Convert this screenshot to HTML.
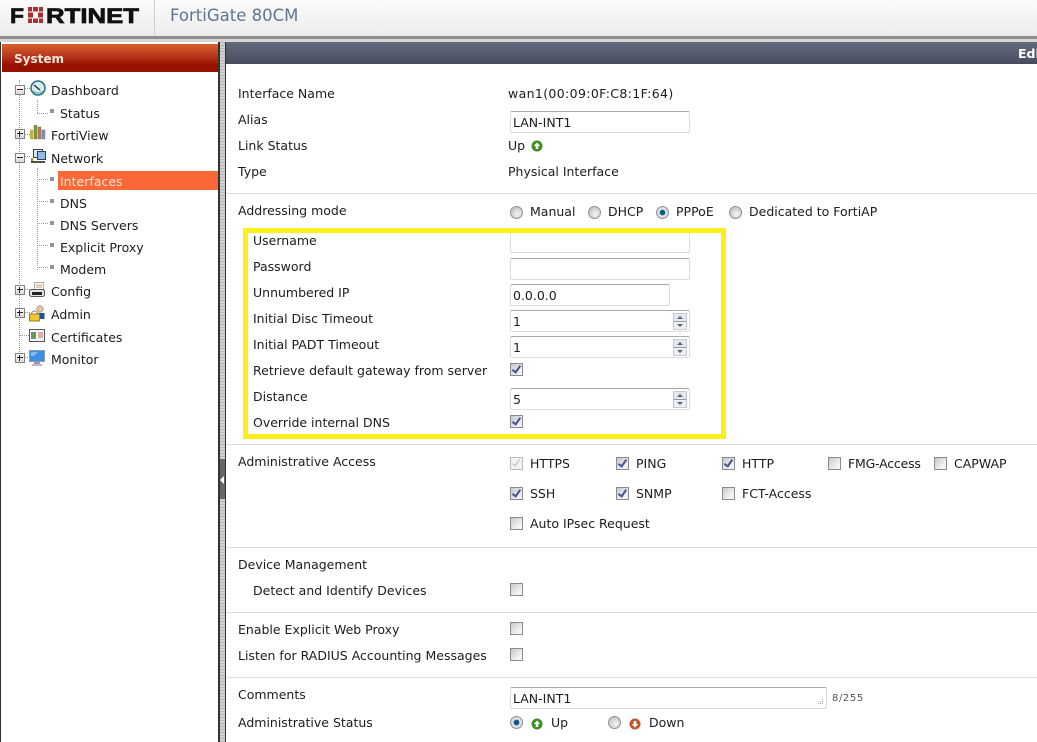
<!DOCTYPE html>
<html><head><meta charset="utf-8"><title>FortiGate 80CM</title>
<style>
html,body{margin:0;padding:0;background:#fff}
#p{position:relative;width:1037px;height:742px;overflow:hidden;background:#fff;font:12.5px/16px "DejaVu Sans","Liberation Sans",sans-serif;color:#1c1c1c}
#p div,#p span,#p svg{position:absolute}
.t{white-space:nowrap;transform:translateY(1px)}
.n{transform:none}
.sep{left:226px;width:811px;height:1px;background:#dcdcdc}
.in{left:510px;width:178px;height:20px;border:1px solid #dcdcdc;border-top-color:#a8a8a8;border-radius:2px;background:#fff;line-height:22px;text-indent:2px;box-sizing:content-box;white-space:nowrap}
.cb{width:11px;height:11px;border:1px solid #8a8a8a;background:linear-gradient(135deg,#c8c8c8,#f4f4f4 75%)}
.cb.c{background:linear-gradient(135deg,#c4c6d2,#f0f0f6 75%)}
.cb.c:after{content:"";position:absolute;left:3px;top:0;width:3px;height:7px;border:solid #44528f;border-width:0 2px 2px 0;transform:rotate(35deg)}
.cb.d{border-color:#bbb;background:#f2f2f2}
.cb.d:after{content:"";position:absolute;left:3px;top:0;width:3px;height:7px;border:solid #bbb;border-width:0 1px 1px 0;transform:rotate(35deg)}
.r{width:11px;height:11px;border:1px solid #909090;border-radius:50%;background:radial-gradient(circle at 60% 65%,#f4f4f4,#bcbcbc 90%)}
.r.on{background:radial-gradient(circle,#12557f 0,#12557f 30%,#dfe8ee 42%,#bfc8ce 100%)}
.sp{width:12px;height:15px;left:673px;background:linear-gradient(#e4e8ee 0,#e4e8ee 47%,#999 47%,#999 53%,#eef0f4 53%);border:1px solid #c4c8d0}
.sp:before{content:"";position:absolute;left:3px;top:2px;border:3px solid transparent;border-top:0;border-bottom:3px solid #56607a}
.sp:after{content:"";position:absolute;left:3px;bottom:2px;border:3px solid transparent;border-bottom:0;border-top:3px solid #56607a}
.ex{left:15px;width:8px;height:8px;border:1px solid #808080;background:linear-gradient(#fff,#d8d8d8)}
.ex:before{content:"";position:absolute;left:1px;top:3px;width:6px;height:1px;background:#222}
.ex.pl:after{content:"";position:absolute;left:3px;top:1px;width:1px;height:6px;background:#222}
.v{width:0;border-left:1px dotted #999}
.h{height:0;border-top:1px dotted #999}
.b{left:50px;width:4px;height:4px;background:#8f96a3}
</style></head><body><div id="p">

<!-- top bar -->
<div style="left:0;top:0;width:1037px;height:36px;background:linear-gradient(#fbfbfb,#ececec)"></div>
<div style="left:154px;top:0;width:1px;height:36px;background:#cfcfcf"></div>
<div style="left:0;top:36px;width:1037px;height:3px;background:#8f8f8f"></div>
<div style="left:0;top:39px;width:1037px;height:3px;background:#d6d6d6"></div>
<svg style="left:0;top:0" width="150" height="36">
<text x="10" y="23" font-family="Liberation Sans" font-weight="bold" font-size="21" textLength="14" lengthAdjust="spacingAndGlyphs" fill="#111" stroke="#111" stroke-width=".7">F</text>
<g fill="#a8302e"><rect x="28" y="7" width="4" height="4.5"/><rect x="33" y="7" width="5" height="4.5"/><rect x="39" y="7" width="4" height="4.5"/><rect x="28" y="12.5" width="5" height="5"/><rect x="38" y="12.5" width="5" height="5"/><rect x="28" y="18.5" width="4" height="4.5"/><rect x="33" y="18.5" width="5" height="4.5"/><rect x="39" y="18.5" width="4" height="4.5"/></g>
<text x="46" y="23" font-family="Liberation Sans" font-weight="bold" font-size="21" textLength="93" lengthAdjust="spacingAndGlyphs" fill="#111" stroke="#111" stroke-width=".7">RTINET</text>
</svg>
<span class="t n" style="left:170px;top:4px;line-height:24px;font-size:16.5px;color:#5f7691">FortiGate 80CM</span>

<!-- side frame -->
<div style="left:0;top:42px;width:1px;height:700px;background:#333"></div>
<div style="left:218px;top:42px;width:2px;height:700px;background:#333"></div>
<div style="left:220px;top:42px;width:5px;height:700px;background:repeating-linear-gradient(#b4b4b4 0,#b4b4b4 1px,#d2d2d2 1px,#d2d2d2 3px)"></div>
<div style="left:225px;top:42px;width:1px;height:700px;background:#333"></div>
<div style="left:220px;top:459px;width:5px;height:40px;background:#666"></div>
<div style="left:220px;top:476px;width:0;height:0;border:4px solid transparent;border-left:0;border-right:4px solid #fff"></div>

<!-- System header -->
<div style="left:2px;top:44px;width:216px;height:28px;background:linear-gradient(#d9602c 0,#b5361a 45%,#981000 75%,#981000 100%)"></div>
<span class="t n" style="left:14px;top:51px;font-weight:bold;font-size:12px;color:#f6e6dc">System</span>

<!-- tree lines -->
<div class="v" style="left:19px;top:80px;height:280px"></div>
<div class="v" style="left:37px;top:100px;height:13px"></div>
<div class="h" style="left:37px;top:113px;width:11px"></div>
<div class="v" style="left:37px;top:168px;height:102px"></div>
<div class="h" style="left:37px;top:179px;width:11px"></div>
<div class="h" style="left:37px;top:201px;width:11px"></div>
<div class="h" style="left:37px;top:223px;width:11px"></div>
<div class="h" style="left:37px;top:245px;width:11px"></div>
<div class="h" style="left:37px;top:267px;width:11px"></div>
<div class="h" style="left:24px;top:88px;width:6px"></div>
<div class="h" style="left:24px;top:134px;width:6px"></div>
<div class="h" style="left:24px;top:156px;width:6px"></div>
<div class="h" style="left:24px;top:289px;width:6px"></div>
<div class="h" style="left:24px;top:312px;width:6px"></div>
<div class="h" style="left:19px;top:335px;width:10px"></div>
<div class="h" style="left:24px;top:357px;width:6px"></div>

<div class="ex" style="top:85px"></div>
<div class="ex pl" style="top:129px"></div>
<div class="ex" style="top:153px"></div>
<div class="ex pl" style="top:285px"></div>
<div class="ex pl" style="top:308px"></div>
<div class="ex pl" style="top:353px"></div>

<!-- tree icons -->
<svg style="left:30px;top:80px" width="16" height="16"><circle cx="8" cy="8" r="7" fill="#d8ecef" stroke="#1f6f80" stroke-width="1.5"/><path d="M4 5l6 5" stroke="#233" stroke-width="1.4"/><path d="M3 11q5 4 10 0" stroke="#5a9" fill="none"/></svg>
<svg style="left:30px;top:125px" width="16" height="15"><rect x="0" y="5" width="3" height="9" fill="#d3ae3a" stroke="#8a7" stroke-width=".4"/><rect x="4" y="0" width="3" height="14" fill="#7a9a3a" stroke="#575" stroke-width=".4"/><rect x="8" y="2" width="3" height="12" fill="#b97a55" stroke="#755" stroke-width=".4"/><rect x="12" y="5" width="3" height="9" fill="#7d94c4" stroke="#557" stroke-width=".4"/></svg>
<svg style="left:29px;top:148px" width="18" height="17"><rect x="4.5" y="1.5" width="9" height="8" fill="#d8e8f6" stroke="#345"/><rect x="8.5" y="3.5" width="8" height="8" fill="#8fbde8" stroke="#345"/><path d="M2 14h14" stroke="#222" stroke-width="1.6"/><path d="M3 10v3" stroke="#b80" stroke-width="2"/></svg>
<svg style="left:29px;top:282px" width="17" height="16"><rect x="5.5" y=".5" width="9" height="8" fill="#fff" stroke="#aaa"/><path d="M7 3h6M7 5h6" stroke="#c96"/><rect x=".5" y="7.5" width="15" height="7" rx="2" fill="#e4e4e4" stroke="#555"/><rect x="3" y="10" width="10" height="3" fill="#222"/></svg>
<svg style="left:29px;top:305px" width="17" height="17"><circle cx="11" cy="4" r="3.2" fill="#e8c89a" stroke="#555" stroke-width=".5"/><path d="M8 8h7.5v6H8z" fill="#1e4fa0"/><path d="M2.5 9a3 3 0 0 1 6 0" fill="none" stroke="#888"/><rect x=".5" y="9" width="10" height="7" fill="#eec52e" stroke="#a57f10"/></svg>
<svg style="left:29px;top:329px" width="17" height="14"><rect x=".5" y=".5" width="15" height="12" fill="#f4f4f4" stroke="#555"/><rect x="2" y="3" width="5" height="7" fill="#6a9a5a"/><path d="M9 4h5M9 6h5M9 8h5" stroke="#c65"/></svg>
<svg style="left:29px;top:350px" width="17" height="17"><rect x=".5" y=".5" width="15" height="11" fill="#3a8fe8" stroke="#99a"/><path d="M2 3h6M2 5h4" stroke="#dde"/><rect x="5" y="12" width="6" height="2" fill="#99a"/><rect x="3" y="14" width="10" height="2" fill="#bbc"/></svg>

<!-- tree labels -->
<span class="t" style="left:51px;top:82px">Dashboard</span>
<div class="b" style="top:109px"></div><span class="t" style="left:60px;top:105px">Status</span>
<span class="t" style="left:51px;top:127px">FortiView</span>
<span class="t" style="left:51px;top:150px">Network</span>
<div style="left:58px;top:171px;width:160px;height:19px;background:#fb6837"></div>
<div class="b" style="top:177px"></div><span class="t" style="left:60px;top:173px;color:#fde3d6">Interfaces</span>
<div class="b" style="top:199px"></div><span class="t" style="left:60px;top:195px">DNS</span>
<div class="b" style="top:221px"></div><span class="t" style="left:60px;top:217px">DNS Servers</span>
<div class="b" style="top:243px"></div><span class="t" style="left:60px;top:239px">Explicit Proxy</span>
<div class="b" style="top:265px"></div><span class="t" style="left:60px;top:261px">Modem</span>
<span class="t" style="left:51px;top:283px">Config</span>
<span class="t" style="left:51px;top:306px">Admin</span>
<span class="t" style="left:51px;top:329px">Certificates</span>
<span class="t" style="left:51px;top:351px">Monitor</span>

<!-- content header -->
<div style="left:226px;top:42px;width:811px;height:22px;background:linear-gradient(#636b7c,#454d5e)"></div>
<span class="t n" style="left:1018px;top:46px;color:#fff;font-weight:bold;font-size:12.5px">Edit</span>

<!-- form labels -->
<span class="t" style="left:238px;top:85px">Interface Name</span>
<span class="t" style="left:238px;top:111px">Alias</span>
<span class="t" style="left:238px;top:137px">Link Status</span>
<span class="t" style="left:238px;top:163px">Type</span>
<span class="t" style="left:508px;top:85px;letter-spacing:.36px">wan1(00:09:0F:C8:1F:64)</span>
<div class="in" style="top:111px">LAN-INT1</div>
<span class="t" style="left:508px;top:137px">Up</span>
<svg style="left:531px;top:140px" width="12" height="12"><circle cx="6" cy="6" r="5.5" fill="#3f8f1f"/><path d="M6 2.5L9.2 6H7.3v3H4.7V6H2.8z" fill="#fff"/></svg>
<span class="t" style="left:508px;top:163px">Physical Interface</span>
<div class="sep" style="top:193px"></div>

<span class="t" style="left:238px;top:202px">Addressing mode</span>
<div class="r" style="left:510px;top:206px"></div><span class="t" style="left:530px;top:203px">Manual</span>
<div class="r" style="left:588px;top:206px"></div><span class="t" style="left:608px;top:203px">DHCP</span>
<div class="r on" style="left:656px;top:206px"></div><span class="t" style="left:676px;top:203px">PPPoE</span>
<div class="r" style="left:729px;top:206px"></div><span class="t" style="left:749px;top:203px">Dedicated to FortiAP</span>

<div style="left:243px;top:228px;width:473px;height:201px;border:5px solid #fbf01a;z-index:3"></div>
<div class="in" style="top:231px"></div>
<div class="in" style="top:258px"></div>
<div class="in" style="top:284px;width:158px">0.0.0.0</div>
<div class="in" style="top:310px">1</div><div class="sp" style="top:313px"></div>
<div class="in" style="top:336px">1</div><div class="sp" style="top:339px"></div>
<div class="in" style="top:388px">5</div><div class="sp" style="top:391px"></div>
<div class="cb c" style="left:510px;top:363px"></div>
<div class="cb c" style="left:510px;top:415px"></div>
<span class="t" style="left:253px;top:232px">Username</span>
<span class="t" style="left:253px;top:258px">Password</span>
<span class="t" style="left:253px;top:284px">Unnumbered IP</span>
<span class="t" style="left:253px;top:310px">Initial Disc Timeout</span>
<span class="t" style="left:253px;top:336px">Initial PADT Timeout</span>
<span class="t" style="left:253px;top:362px">Retrieve default gateway from server</span>
<span class="t" style="left:253px;top:388px">Distance</span>
<span class="t" style="left:253px;top:414px">Override internal DNS</span>
<div class="sep" style="top:444px"></div>

<span class="t" style="left:238px;top:453px">Administrative Access</span>
<div class="cb d" style="left:510px;top:457px"></div><span class="t" style="left:530px;top:455px">HTTPS</span>
<div class="cb c" style="left:616px;top:457px"></div><span class="t" style="left:636px;top:455px">PING</span>
<div class="cb c" style="left:722px;top:457px"></div><span class="t" style="left:742px;top:455px">HTTP</span>
<div class="cb" style="left:828px;top:457px"></div><span class="t" style="left:848px;top:455px;letter-spacing:-.2px">FMG-Access</span>
<div class="cb" style="left:934px;top:457px"></div><span class="t" style="left:954px;top:455px">CAPWAP</span>
<div class="cb c" style="left:510px;top:487px"></div><span class="t" style="left:530px;top:485px">SSH</span>
<div class="cb c" style="left:616px;top:487px"></div><span class="t" style="left:636px;top:485px">SNMP</span>
<div class="cb" style="left:722px;top:487px"></div><span class="t" style="left:742px;top:485px">FCT-Access</span>
<div class="cb" style="left:510px;top:517px"></div><span class="t" style="left:530px;top:515px">Auto IPsec Request</span>
<div class="sep" style="top:547px"></div>

<span class="t" style="left:238px;top:556px">Device Management</span>
<span class="t" style="left:253px;top:582px">Detect and Identify Devices</span>
<div class="cb" style="left:510px;top:583px"></div>
<div class="sep" style="top:612px"></div>

<span class="t" style="left:238px;top:621px">Enable Explicit Web Proxy</span>
<div class="cb" style="left:510px;top:622px"></div>
<span class="t" style="left:238px;top:647px">Listen for RADIUS Accounting Messages</span>
<div class="cb" style="left:510px;top:648px"></div>
<div class="sep" style="top:677px"></div>

<span class="t" style="left:238px;top:686px">Comments</span>
<div class="in" style="top:687px;width:315px">LAN-INT1</div>
<svg style="left:815px;top:698px" width="10" height="9"><g fill="#aaa"><rect x="7" y="1" width="1" height="1"/><rect x="5" y="3" width="1" height="1"/><rect x="7" y="3" width="1" height="1"/><rect x="3" y="5" width="1" height="1"/><rect x="5" y="5" width="1" height="1"/><rect x="7" y="5" width="1" height="1"/></g></svg>
<span class="t" style="left:832px;top:690px;font-size:10px;letter-spacing:.6px;color:#555">8/255</span>
<span class="t" style="left:238px;top:714px">Administrative Status</span>
<div class="r on" style="left:510px;top:716px"></div>
<svg style="left:531px;top:718px" width="12" height="12"><circle cx="6" cy="6" r="5.5" fill="#3f8f1f"/><path d="M6 2.5L9.2 6H7.3v3H4.7V6H2.8z" fill="#fff"/></svg>
<span class="t" style="left:551px;top:714px">Up</span>
<div class="r" style="left:608px;top:716px"></div>
<svg style="left:629px;top:718px" width="12" height="12"><circle cx="6" cy="6" r="5.5" fill="#c4562a"/><path d="M6 9.5L2.8 6h1.9V3h2.6v3h1.9z" fill="#fff"/></svg>
<span class="t" style="left:649px;top:714px">Down</span>

</div></body></html>
